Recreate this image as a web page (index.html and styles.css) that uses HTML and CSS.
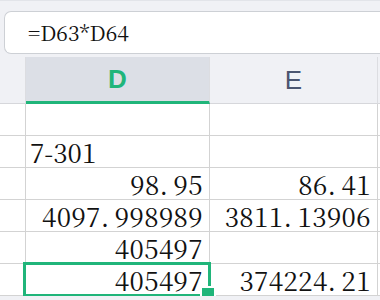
FILE: index.html
```html
<!DOCTYPE html>
<html lang="en">
<head>
    <meta charset="UTF-8">
    <title>Sheet</title>
    <link rel="stylesheet" href="styles.css">
</head>
<body>
    <div class="formula-bar">
        <p class="formula-box">=D63*D64</p>
    </div>

    <div class="sheet">
        <div class="row head-row">
            <div class="cell corner"></div>
            <div class="cell col-head active">D</div>
            <div class="cell col-head">E</div>
            <div class="cell rest"></div>
        </div>
        <div class="row">
            <div class="cell corner"></div>
            <div class="cell"></div>
            <div class="cell"></div>
            <div class="cell rest"></div>
        </div>
        <div class="row">
            <div class="cell corner"></div>
            <p class="cell text">7-301</p>
            <div class="cell"></div>
            <div class="cell rest"></div>
        </div>
        <div class="row">
            <div class="cell corner"></div>
            <p class="cell num">98<span class="dot">.</span>95</p>
            <p class="cell num">86<span class="dot">.</span>41</p>
            <div class="cell rest"></div>
        </div>
        <div class="row">
            <div class="cell corner"></div>
            <p class="cell num">4097<span class="dot">.</span>998989</p>
            <p class="cell num">3811<span class="dot">.</span>13906</p>
            <div class="cell rest"></div>
        </div>
        <div class="row">
            <div class="cell corner"></div>
            <p class="cell num">405497</p>
            <div class="cell"></div>
            <div class="cell rest"></div>
        </div>
        <div class="row">
            <div class="cell corner"></div>
            <p class="cell num selected">405497</p>
            <p class="cell num">374224<span class="dot">.</span>21</p>
            <div class="cell rest"></div>
        </div>
    </div>
</body>
</html>
```

FILE: styles.css
```css
body {
    margin: 0;
    background-color: #f0f1f5;
    color: #111;
    border-top: 1px solid #e2e4e9;
}

p {
    margin: 0;
}

.formula-bar {
    padding: 10px 0 3px 4px;
}

.formula-box {
    box-sizing: border-box;
    height: 43px;
    background-color: white;
    border: 1px solid #cdd0d5;
    border-right: none;
    border-radius: 7px 0 0 7px;
    padding-left: 23px;
    font: 21px/40px "Noto Serif CJK SC", serif;
}

.sheet {
    background-color: white;
}

.row {
    display: grid;
    grid-template-columns: 26px 184px 168px 1fr;
    height: 32px;
}

.cell {
    box-sizing: border-box;
    border-right: 1px solid #d3d3d3;
    border-bottom: 1px solid #d3d3d3;
    font: 26px/31px "Noto Serif CJK SC", serif;
    white-space: nowrap;
}

.cell.rest {
    border-right: none;
}

.head-row {
    height: 47px;
    background-color: #f0f1f5;
}

.head-row .cell {
    border-right-color: #dcdde1;
    border-bottom-color: #d6d7db;
}

.cell.col-head {
    font: 26px/46px "Liberation Sans", sans-serif;
    text-align: center;
    color: #4b5570;
}

.cell.col-head.active {
    background-color: #dcdfe6;
    color: #20b57a;
    font-weight: 700;
    border-bottom: 3px solid #20b57a;
    line-height: 44px;
}

.text {
    padding-left: 4px;
}

.num {
    text-align: right;
    padding-right: 6px;
    letter-spacing: 0.4px;
}

.dot {
    display: inline-block;
    width: 14px;
    text-align: left;
}

.selected {
    position: relative;
}

.selected::after {
    content: "";
    position: absolute;
    left: -3px;
    top: -2px;
    right: -2px;
    bottom: -2px;
    border: 3px solid #20b57a;
}

.selected::before {
    content: "";
    position: absolute;
    right: -7px;
    bottom: -7px;
    width: 12px;
    height: 12px;
    background-color: #20b57a;
    border: 2px solid white;
    z-index: 1;
}
```
